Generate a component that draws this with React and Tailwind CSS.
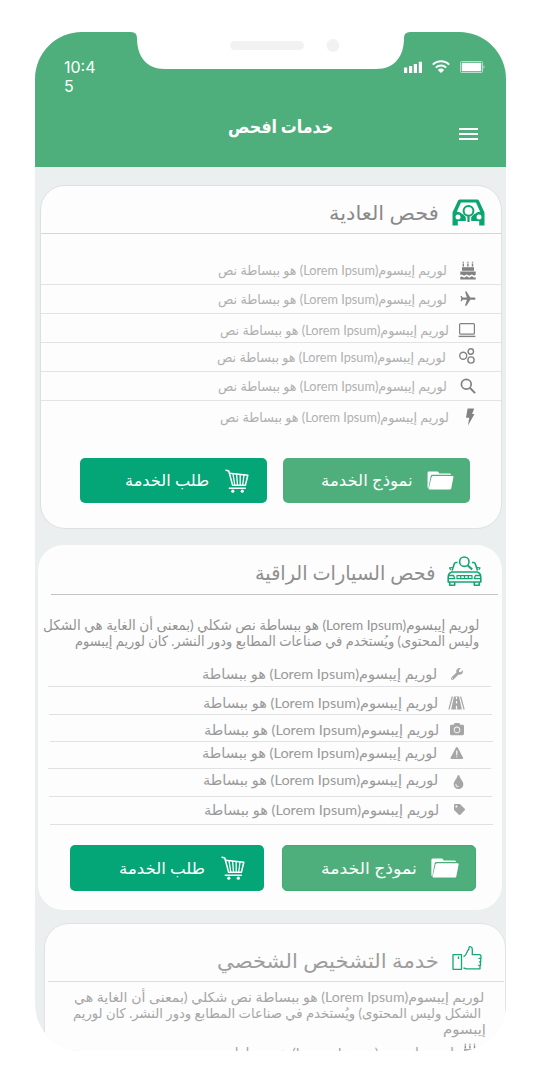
import { useLayoutEffect, useRef, useState } from "react";
import { FaWrench, FaCamera, FaTint, FaTag } from "react-icons/fa";
import { MdFlight } from "react-icons/md";
import { IoWarning } from "react-icons/io5";

const LOREM = "لوريم إيبسوم(Lorem Ipsum) هو ببساطة";

/* One line of right-to-left text squeezed or stretched to its box width. */
function Line({ children, className = "" }) {
  const inner = useRef(null);
  const [scale, setScale] = useState(1);
  useLayoutEffect(() => {
    const el = inner.current;
    setScale(el.parentElement.clientWidth / el.offsetWidth);
  }, [children]);
  return (
    <span dir="rtl" className={`block shrink-0 whitespace-nowrap ${className}`}>
      <span ref={inner} className="inline-block origin-right" style={{ transform: `scaleX(${scale})` }}>
        {children}
      </span>
    </span>
  );
}

const CakeIcon = ({ className = "" }) => (
  <svg className={`h-[19px] w-4 ${className}`} viewBox="0 0 16 19" fill="currentColor">
    <path d="M2.600.8h1.400v1H2.600zM7.200.8h1.400v1H7.200zM11.800.8h1.400v1h-1.400zM2.600 2.400h1.400V5.500H2.600zM7.200 2.400h1.400V5.500H7.200zM11.800 2.400h1.400V5.500h-1.400z" />
    <path d="M2 6.200h12v3.600H2z" />
    <path d="M.3 10.500h15.400v3.300q-1.300 1.300-2.600.2-1.300-1.200-2.600 0-1.300 1.200-2.500 0-1.300-1.200-2.600 0-1.200 1.200-2.500 0-1.300-.8-2.600 0z" />
    <path d="M.3 18.600v-2.700q1.300-.8 2.600 0 1.300 1.200 2.500 0 1.300-1.200 2.600 0 1.200 1.200 2.500 0 1.300-1.200 2.600 0 1.300 1 2.600 0v2.700z" />
  </svg>
);

const LaptopIcon = () => (
  <svg className="h-4 w-[18px]" viewBox="0 0 18 16" fill="none" stroke="currentColor" strokeWidth="1.2">
    <rect x="1.6" y="1.6" width="14.8" height="10.6" rx="1" />
    <path d="M0.6 14.4h16.8" strokeWidth="1.4" />
  </svg>
);

const CirclesIcon = () => (
  <svg className="h-4 w-4" viewBox="0 0 16 16" fill="none" stroke="currentColor" strokeWidth="1.4">
    <circle cx="4.2" cy="7.800" r="3.500" />
    <circle cx="11.800" cy="3.500" r="2.700" />
    <circle cx="12" cy="12" r="3.100" />
  </svg>
);

const SearchIcon = () => (
  <svg className="h-4 w-4" viewBox="0 0 16 16" fill="none" stroke="currentColor" strokeWidth="1.700">
    <circle cx="6.300" cy="6.300" r="4.900" />
    <path d="M9.800 9.800l5.300 5.300" strokeWidth="2" />
  </svg>
);

const BoltIcon = () => (
  <svg className="h-[18px] w-[10px]" viewBox="0 0 10 18" fill="currentColor">
    <path d="M2.600 0.500h6.600L7.100 6h2.400L3 17.600 4.200 9.800H1z" />
  </svg>
);

const RoadIcon = () => (
  <svg className="h-[14px] w-[17px]" viewBox="0 0 17 14" fill="none" stroke="currentColor">
    <path d="M4.400 0.500L0.900 13.500M12.600 0.500l3.500 13" strokeWidth="1.200" />
    <path d="M6 0.500h5l2.900 13H3.100z" fill="currentColor" stroke="none" />
    <path d="M8.500 1v2.200M8.500 5v2.600M8.500 9.800v3.600" stroke="#fdfdfd" strokeWidth="1.200" />
  </svg>
);

const CartIcon = ({ className }) => (
  <svg className={className} viewBox="0 0 24 24" fill="none" stroke="currentColor" strokeWidth="1.500" strokeLinecap="round" strokeLinejoin="round">
    <path d="M1 1.200l2.800.8 3.800 14.200h12.600" />
    <path d="M4.400 4.200l18.400 2-2.400 10" />
    <path d="M4.300 19.200h16" />
    <path d="M8 5l1.800 11M11.600 5.400l.9 10.600M15.200 5.800v10.200M19 6l-1.300 10" strokeWidth="1.300" />
    <circle cx="7.800" cy="22.200" r="1.600" fill="currentColor" stroke="none" />
    <circle cx="17.300" cy="22.200" r="1.600" fill="currentColor" stroke="none" />
  </svg>
);

const FolderIcon = ({ className }) => (
  <svg className={className} viewBox="0 0 28 20" fill="currentColor">
    <path d="M0.400 17V1.800Q0.500 0.500 1.800 0.500h8.800q1 0 1.400.8l.6 1.200h11q1.400 0 1.600 1.500H5.200Q4 4 3.700 5.200L1.200 18.400Q.4 18 .4 17z" />
    <path d="M6 5.200h20.600q1.200 0 1 1.200l-2.300 12q-.3 1.200-1.500 1.200H2.400q-1 0-.8-1L4.600 6.300Q4.900 5.200 6 5.200z" />
  </svg>
);

const CarFrontIcon = () => (
  <svg className="h-[27px] w-[33px] text-[#0ba56f]" viewBox="0 0 33 27">
    <path
      fill="currentColor"
      d="M8 .5h17q1.300 0 1.900 1.100L31.300 11q1.200 1.400 1.200 3.200V26.500H27.200V22H5.800v4.500H.5V14.200Q.5 12.400 1.700 11L6.100 1.600Q6.700 .5 8 .5z"
    />
    <path fill="#fdfdfd" d="M9 3.400h15l4.200 9.300q-3-.3-5 2l-4 3.300v5h-5.400v-5l-4-3.300q-2-2.300-5-2z" />
    <path d="M10.500 14.500l2.500 3v4.500H9zM22.500 14.500l-2.500 3v4.500h4z" fill="currentColor" />
    <circle cx="16.500" cy="11.800" r="4.900" fill="#fdfdfd" stroke="currentColor" strokeWidth="2" />
    <path d="M16.500 16.500v6.500" stroke="currentColor" strokeWidth="2.200" />
    <circle cx="6" cy="18" r="2.500" fill="#fdfdfd" />
    <circle cx="27" cy="18" r="2.500" fill="#fdfdfd" />
  </svg>
);

const CarSearchIcon = () => (
  <svg className="h-[30px] w-[35px] text-[#12a673]" viewBox="0 0 35 30" fill="none" stroke="currentColor" strokeWidth="1.600" strokeLinejoin="round">
    <path d="M10.500 6.500H8.800q-1 0-1.400 1L5 14.500M25 6.500h1.800q1 0 1.400 1L30.500 14.500" />
    <circle cx="17.300" cy="5.700" r="4.700" />
    <path d="M20.600 9.200l4.600 4.300" strokeWidth="2" />
    <path d="M5.500 11.500l-3 .4 1.200 2M30 11.500l3 .4-1.200 2" strokeWidth="1.200" />
    <path d="M4.600 16h25.800q3.400 1.300 3.400 5.500v4.500H1.200v-4.500Q1.200 17.300 4.600 16z" />
    <path d="M2 19.500h4.500l1.300 3.200H1.500M33 19.500h-4.500l-1.300 3.200h6.300" strokeWidth="1.300" />
    <path d="M10 19.700h15v3H10zM13.700 19.700v3M17.500 19.700v3M21.300 19.700v3" strokeWidth="1.200" />
    <path d="M2.700 26v3.200h5V26M27.300 26v3.200h5V26" />
  </svg>
);

const ThumbIcon = () => (
  <svg className="h-[25px] w-[30px] text-[#14a777]" viewBox="0 0 30 25" fill="none" stroke="currentColor" strokeWidth="1.300" strokeLinejoin="round">
    <path d="M1 8.700h8.500V23.300H1zM6.500 10.500v2.500" />
    <path d="M11.500 10.500q1.500-.4 2.200-1.700l2-4q1.400-1 1.400-3.500.3-1 1.500-.6 2 .6 1.700 3.800V8.700h7.500q1.200.3 1.200 1.900V12.300H27h1.700v3.600H27.400h1.100v3.500H26.800h1.200v3.400H14.500L11.500 22" />
  </svg>
);

const BASIC_ROWS = [
  { icon: <CakeIcon />, row: "h-[51px] pt-[26px]", text: "", mark: "" },
  { icon: <MdFlight className="size-[18px] rotate-90" />, row: "h-[29px] pt-[4px]", text: "", mark: "pl-0 pr-px" },
  { icon: <LaptopIcon />, row: "h-[29px] pt-[6px]", text: "-mr-[2px]", mark: "pr-[2px]" },
  { icon: <CirclesIcon />, row: "h-[29px] pt-[4px]", text: "mr-px", mark: "-mt-px pr-[2px]" },
  { icon: <SearchIcon />, row: "h-[29px] pt-[4px]", text: "", mark: "" },
];

const PREMIUM_ROWS = [
  { icon: <FaWrench className="size-[12px]" />, row: "h-[37px] pt-[14px]", line: "ml-[10px]", mark: "" },
  { icon: <RoadIcon />, row: "h-[28px] pt-[6px]", line: "ml-[11px]", mark: "-translate-x-[2px]" },
  { icon: <FaCamera className="h-[14px] w-[16px]" />, row: "h-[27px] pt-[5px]", line: "ml-[12px]", mark: "-translate-x-[2px] -translate-y-px" },
  { icon: <IoWarning className="size-[16px]" />, row: "h-[27px] pt-px", line: "ml-[10px]", mark: "" },
  { icon: <FaTint className="h-[14px] w-[11px]" />, row: "h-[28px] pt-px", line: "ml-[11px]", mark: "translate-y-[2px]" },
  { icon: <FaTag className="size-[11px]" />, row: "h-[28px] pt-[3px]", line: "ml-[12px]", mark: "-translate-y-px" },
];

function BasicRow({ icon, row, text, mark, last }) {
  return (
    <div dir="rtl" className={`flex items-start gap-[9px] pr-[21px] ${last ? "" : "border-b border-[#e2e4e4]"} ${row}`}>
      <div className={`flex h-5 w-6 shrink-0 items-center justify-center text-[#828282] ${mark}`}>{icon}</div>
      <Line className={`w-[229px] text-[13px] leading-5 text-[#b0b0b0] ${text}`}>{LOREM} نص</Line>
    </div>
  );
}

function PremiumRow({ icon, row, line, mark }) {
  return (
    <div dir="rtl" className={`flex w-[443px] items-start gap-[8px] border-b border-[#e0e2e2] pr-[22px] ${line} ${row}`}>
      <div className={`flex h-5 w-6 shrink-0 items-center justify-center text-[#a6a6a6] ${mark}`}>{icon}</div>
      <Line className="w-[235px] text-[14px] leading-5 text-[#9a9a9a]">{LOREM}</Line>
    </div>
  );
}

function StatusIcons() {
  return (
    <div className="flex items-center gap-[10px] text-white">
      <svg className="h-3 w-[18px]" viewBox="0 0 18 12" fill="currentColor">
        <path d="M0 6.500h3.200V12H0zM5 5h3.200v7H5zM9.800 3H13v9H9.800zM14.800.800H18V12h-3.200z" />
      </svg>
      <svg className="h-[13px] w-[18px]" viewBox="0 0 18 13" fill="none" stroke="currentColor" strokeWidth="2">
        <path d="M.8 4.600a11.600 11.600 0 0 1 16.400 0M3.800 7.600a7.400 7.400 0 0 1 10.400 0" />
        <path d="M9 13L5.800 9.900a4.600 4.600 0 0 1 6.400 0z" fill="currentColor" stroke="none" />
      </svg>
      <svg className="h-3 w-[25px]" viewBox="0 0 25 12">
        <rect x=".5" y=".5" width="22" height="11" rx="1" fill="none" stroke="#b9dfca" />
        <rect x="1.800" y="1.800" width="19.400" height="8.400" fill="currentColor" />
        <path d="M23.500 4v4l1.300-2z" fill="#b9dfca" />
      </svg>
    </div>
  );
}

export default function App() {
  return (
    <div className="h-[1083px] w-[542px] overflow-hidden bg-white pl-[35px] pt-8 font-[Lato,'DejaVu_Sans',sans-serif]">
      <main className="relative h-[1019px] w-[471px] overflow-hidden rounded-[47px] bg-[#ebeff0]">
        <header className="h-[135px] bg-[#4eaf7c]">
          <div className="flex items-start justify-between pl-[29px] pr-[21px] pt-[26px]">
            <div className="font-[Inter,sans-serif] text-[16px] leading-[19px] text-white">
              <div>10:4</div>
              <div>5</div>
            </div>
            <div className="pt-[2px]">
              <StatusIcons />
            </div>
          </div>
          <div className="mt-[16px] flex items-start justify-between pl-[193px] pr-[28px]">
            <Line className="w-[105px] text-[18px] font-bold leading-7 text-white">خدمات افحص</Line>
            <svg className="mt-[16px] h-3 w-[19px]" viewBox="0 0 19 12" stroke="#fff" strokeWidth="2">
              <path d="M0 1h19M0 6h19M0 11h19" />
            </svg>
          </div>
        </header>

        <svg className="absolute left-[96px] top-0 h-[38px] w-[279px]" viewBox="0 0 279 38">
          <path d="M0 0Q6 0 6 6C6 24 15 37 34 37H245C264 37 273 24 273 6Q273 0 279 0z" fill="#fff" />
          <rect x="99" y="9" width="74" height="9" rx="4.500" fill="#f2f2f2" />
          <circle cx="202" cy="13.500" r="6.400" fill="#f2f2f2" />
        </svg>

        <section className="ml-[5px] mt-[18px] h-[344px] w-[462px] rounded-[25px] border border-[#dde1e1] bg-[#fdfdfd]">
          <div dir="rtl" className="flex h-12 items-start gap-[13px] border-b border-[#d3d6d6] pr-4 pt-[13px]">
            <CarFrontIcon />
            <Line className="-mt-px w-[110px] text-[20px] leading-7 text-[#8a8a8a]">فحص العادية</Line>
          </div>
          {BASIC_ROWS.map((r, i) => (
            <BasicRow key={i} {...r} />
          ))}
          <BasicRow icon={<BoltIcon />} row="h-[57px] pt-[6px]" text="-mr-[2px]" mark="pl-1" last />
          <div dir="rtl" className="flex gap-[16px] pr-[31px]">
            <div className="flex h-[45px] w-[187px] items-center gap-[14px] rounded-[5px] bg-[#4eaf7c] pr-4 text-white">
              <FolderIcon className="h-[19px] w-[27px]" />
              <Line className="w-[92px] pb-px text-[16px] leading-6">نموذج الخدمة</Line>
            </div>
            <div className="flex h-[45px] w-[187px] items-center gap-[16px] rounded-[5px] bg-[#04a577] pr-[18px] text-white">
              <CartIcon className="size-6" />
              <Line className="w-[84px] pb-px text-[16px] leading-6">طلب الخدمة</Line>
            </div>
          </div>
        </section>

        <section className="ml-[3px] mt-4 h-[365px] w-[464px] rounded-[25px] bg-[#fdfdfd]">
          <div dir="rtl" className="ml-[13px] mr-1 flex h-[50px] items-start gap-[12px] border-b border-[#c3c3c3] pr-4 pt-[11px]">
            <CarSearchIcon />
            <Line className="mt-[2px] w-[180px] text-[20px] leading-7 text-[#8f8f8f]">فحص السيارات الراقية</Line>
          </div>
          <div dir="rtl" className="h-[55px] pr-[23px] pt-[22px] text-[14px] leading-4 text-[#939393]">
            <Line className="w-[436px]">{LOREM} نص شكلي (بمعنى أن الغاية هي الشكل</Line>
            <Line className="w-[404px]">وليس المحتوى) ويُستخدم في صناعات المطابع ودور النشر. كان لوريم إيبسوم</Line>
          </div>
          {PREMIUM_ROWS.map((r, i) => (
            <PremiumRow key={i} {...r} />
          ))}
          <div dir="rtl" className="mt-5 flex gap-[18px] pr-[26px]">
            <div className="flex h-[46px] w-[194px] items-center gap-[14px] rounded-[5px] border border-[#3fac72] bg-[#4eaf7c] pr-4 text-white">
              <FolderIcon className="h-5 w-7" />
              <Line className="w-[96px] text-[16px] leading-6">نموذج الخدمة</Line>
            </div>
            <div className="flex h-[46px] w-[194px] items-center gap-[16px] rounded-[5px] bg-[#04a577] pr-[19px] text-white">
              <CartIcon className="size-6" />
              <Line className="w-[86px] text-[16px] leading-6">طلب الخدمة</Line>
            </div>
          </div>
        </section>

        <section className="ml-[9px] mt-[13px] h-[200px] w-[462px] rounded-t-[25px] border border-[#dfe3e3] bg-[#fdfdfd]">
          <div dir="rtl" className="ml-[3px] mr-px flex h-[58px] items-start gap-[13px] border-b border-[#dcdede] pr-[22px] pt-[22px]">
            <ThumbIcon />
            <Line className="w-[222px] text-[20px] leading-7 text-[#9e9e9e]">خدمة التشخيص الشخصي</Line>
          </div>
          <div dir="rtl" className="pr-[19px] pt-[7px] text-[13.5px] leading-4 text-[#a6a6a6]">
            <Line className="mr-[2px] w-[410px]">{LOREM} نص شكلي (بمعنى أن الغاية هي</Line>
            <Line className="mr-[5px] w-[408px]">الشكل وليس المحتوى) ويُستخدم في صناعات المطابع ودور النشر. كان لوريم</Line>
            <Line className="w-[43px]">إيبسوم</Line>
          </div>
          <div dir="rtl" className="flex items-start gap-[8px] pr-[27px] pt-[6px] text-[#8c8c8c]">
            <CakeIcon />
            <Line className="w-[252px] text-[14px] leading-5 text-[#a6a6a6]">{LOREM} نص</Line>
          </div>
        </section>
      </main>
    </div>
  );
}
